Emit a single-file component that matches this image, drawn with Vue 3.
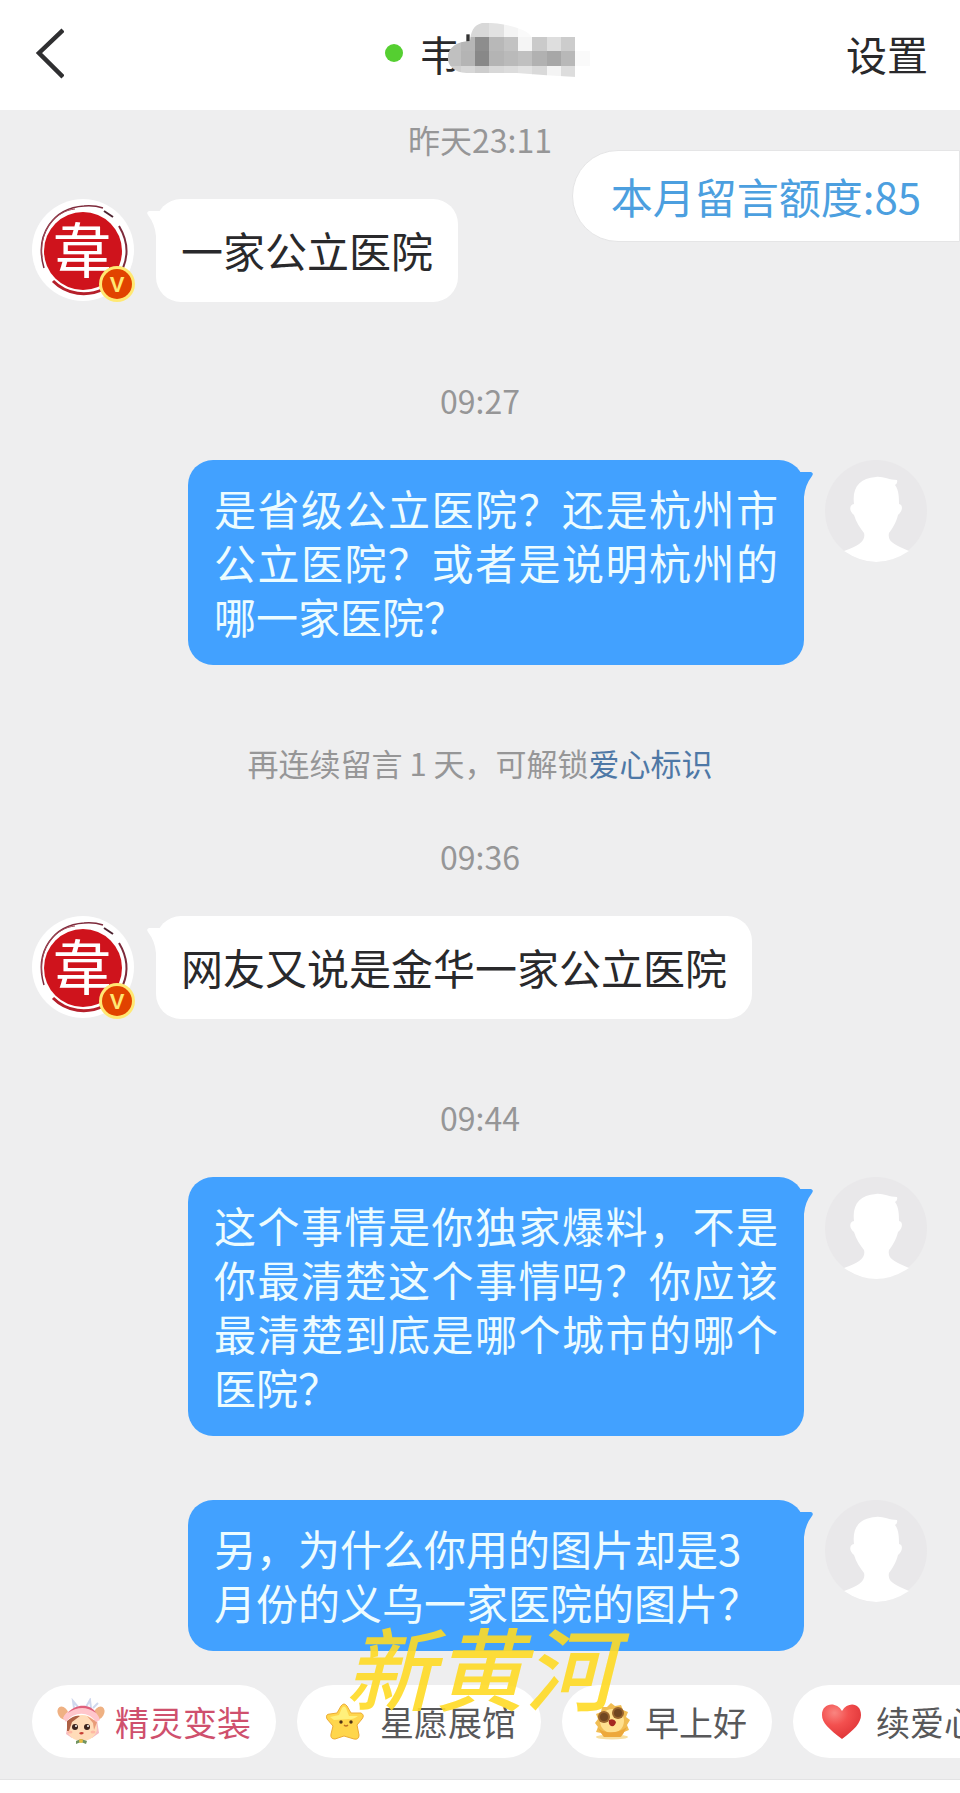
<template>
  <div class="chat" lang="zh-CN">
    <header class="topbar">
      <button class="back" type="button" aria-label="返回">
        <svg width="32" height="52" viewBox="0 0 32 52">
          <path d="M31 3 L7 26 L31 50" fill="none" stroke="#2f2f31" stroke-width="4.5" />
        </svg>
      </button>
      <h1 class="title">
        <span class="online"></span>
        <span class="name">韦
          <svg class="mosaic" width="147" height="57" viewBox="225 35 441 171" aria-hidden="true">
            <defs>
              <clipPath id="smudge">
                <path d="M300 92 C303 52 320 38 345 37 C400 37 480 58 484 80 H660 V167 H618 V200 L530 195 L440 188 H290 C250 186 233 165 233 140 C235 112 260 93 300 92Z" />
              </clipPath>
            </defs>
            <rect x="289" y="72" width="10" height="22" fill="#333" />
            <g clip-path="url(#smudge)" shape-rendering="crispEdges">
              <rect
                v-for="(cell, i) in mosaic"
                :key="i"
                :x="cell.x"
                :y="cell.y"
                width="44"
                height="43"
                :fill="cell.fill"
              />
            </g>
          </svg>
        </span>
      </h1>
      <button class="settings" type="button">设置</button>
    </header>

    <main class="thread">
      <div class="quota">本月留言额度:85</div>

      <template v-for="(item, i) in items" :key="i">
        <p v-if="item.type === 'time'" class="time">{{ item.text }}</p>
        <p v-else-if="item.type === 'notice'" class="notice">
          {{ item.text }}<a href="#">{{ item.link }}</a>
        </p>
        <div v-else class="message" :class="item.type">
          <svg v-if="item.type === 'theirs'" class="avatar" viewBox="0 0 103 103" aria-hidden="true">
            <circle cx="51" cy="51" r="51" fill="#fff" />
            <circle cx="51" cy="52" r="39" fill="#cf131c" />
            <path d="M12 69 C2 35 22 9 52 7 Q62 6 71 9" fill="none" stroke="#7d2a3b" stroke-width="1.5" />
            <path d="M10 58 C7 32 23 12 43 10" fill="none" stroke="#a34a58" stroke-width="1" />
            <path d="M72 12 L81 18" stroke="#4d2430" stroke-width="2" />
            <path d="M87 27 C96 42 96 57 91 69" fill="none" stroke="#7d2a3b" stroke-width="2" />
            <path d="M21 82 C35 96 55 98 72 90" fill="none" stroke="#b5202b" stroke-width="3" />
            <text x="50" y="74" class="seal">韋</text>
            <circle cx="85" cy="85" r="18" fill="#ffe873" />
            <circle cx="85" cy="85" r="15" fill="#e14300" />
            <text x="85" y="93" class="vip">V</text>
          </svg>
          <div class="bubble" :class="{ justified: item.justified }">
            <p>{{ item.text }}</p>
            <svg class="tail" width="26" height="26" viewBox="0 0 26 26" aria-hidden="true">
              <path d="M0 1 H23 Q26 2 24 5 Q17 14 16 26 H0Z" fill="currentColor" />
            </svg>
          </div>
          <svg v-if="item.type === 'mine'" class="avatar" viewBox="0 0 103 103" aria-hidden="true">
            <circle cx="51" cy="51" r="51" fill="#e9e8ea" />
            <path
              d="M51 17 C57 16 64 20 72 20 Q73 23 70 25 C74 30 74 38 74 44 C79 45 77 52 73 55 C71 63 67 69 64 73 C62 82 70 85 84 91 Q51 113 19 91 C34 86 41 81 39 73 C35 68 31 62 29 55 C24 51 24 45 29 44 C27 28 34 18 51 17Z"
              fill="#fff"
            />
          </svg>
        </div>
      </template>
    </main>

    <footer class="bottom">
      <nav class="chips">
        <button v-for="chip in chips" :key="chip.icon" class="chip" :class="chip.icon" type="button">
          <svg v-if="chip.icon === 'deer'" width="48" height="48" viewBox="0 0 48 48" aria-hidden="true">
            <path d="M17 10 L16 3 L21 9 M29 9 L33 2 L34 10 M36 10 L41 5" fill="none" stroke="#cfd8ee" stroke-width="2" />
            <ellipse cx="6" cy="15" rx="5" ry="7" transform="rotate(-30 6 15)" fill="#efb183" />
            <ellipse cx="42" cy="15" rx="5" ry="7" transform="rotate(30 42 15)" fill="#efb183" />
            <path d="M11 24 L9 36 L15 40 L35 40 L42 35 L40 22Z" fill="#f7bcc2" />
            <ellipse cx="25" cy="30" rx="15" ry="13" fill="#ffdcb9" />
            <path d="M10 33 V23 Q17 17 23 18 L15 24 L12 33Z" fill="#ad6044" />
            <path d="M37 32 L40 24 L30 18 L36 25Z" fill="#e99b78" />
            <path d="M6 20 C12 6 38 4 43 22 L39 24 C32 13 17 13 9 24Z" fill="#ffc6cb" />
            <path d="M11 15 C19 5 34 6 39 15 C29 8 20 9 11 15Z" fill="#df607c" />
            <circle cx="18" cy="29" r="3" fill="#3c241e" />
            <circle cx="30" cy="29" r="3" fill="#3c241e" />
            <circle cx="19" cy="28" r="1" fill="#fff" />
            <circle cx="31" cy="28" r="1" fill="#fff" />
            <ellipse cx="13" cy="34" rx="2.5" ry="1.5" fill="#ffb9a4" />
            <ellipse cx="36" cy="34" rx="2.5" ry="1.5" fill="#ffb9a4" />
            <path d="M22 35 Q24 38 27 35 Q25 33 22 35Z" fill="#c63f34" />
            <path d="M19 43 L24 41 L30 43 L29 46 L24 44 L19 46Z" fill="#709361" />
            <circle cx="24" cy="43" r="2" fill="#e9bd42" />
          </svg>
          <svg v-else-if="chip.icon === 'star'" width="48" height="48" viewBox="0 0 48 48" aria-hidden="true">
            <path
              d="M19 8 Q22 4 25 8 L29 15 L39 15 Q43 17 40 21 L35 27 L37 37 Q37 42 32 41 L22 38 L13 41 Q8 41 9 36 L11 28 L5 21 Q3 16 8 16 L15 15Z"
              fill="#ffd64c"
              stroke="#edac35"
              stroke-width="1"
            />
            <path d="M20 10 Q22 7 24 10 L27 18 L36 18 Q30 22 27 21 L12 22 L8 19 L17 17Z" fill="#fff07b" />
            <circle cx="19" cy="24" r="1.7" fill="#513217" />
            <circle cx="29" cy="24" r="1.7" fill="#513217" />
            <path d="M22 27 Q24 29 26 27" fill="none" stroke="#bd7526" stroke-width="1.4" />
          </svg>
          <svg v-else-if="chip.icon === 'sun'" width="48" height="48" viewBox="0 0 48 48" aria-hidden="true">
            <ellipse cx="25" cy="39" rx="16" ry="2.5" fill="#f8dfa0" />
            <path
              d="M15 9 L20 9 L24 5 L28 8 L34 7 L36 12 L41 14 L39 19 L43 22 L40 27 L42 32 L37 34 L34 39 L17 39 L14 35 L9 34 L11 29 L8 25 L11 21 L9 16 L14 14Z"
              fill="#f1bd53"
            />
            <circle cx="25" cy="23" r="12" fill="#ffe08f" />
            <path d="M10 29 C16 36 31 36 40 29 L36 36 L33 39 H17Z" fill="#eda83b" />
            <circle cx="17" cy="19" r="6" fill="#99642d" />
            <circle cx="31" cy="15" r="6" fill="#99642d" />
            <circle cx="17" cy="19" r="4" fill="#704621" />
            <circle cx="31" cy="15" r="4" fill="#704621" />
            <path d="M22 22 Q27 20 29 24 Q28 29 24 28 Q21 26 22 22Z" fill="#a52820" />
          </svg>
          <svg v-else width="48" height="48" viewBox="0 0 48 48" aria-hidden="true">
            <defs>
              <radialGradient id="heart" cx="32%" cy="24%" r="80%">
                <stop offset="0" stop-color="#f98580" />
                <stop offset="0.45" stop-color="#f3504f" />
                <stop offset="1" stop-color="#df3437" />
              </radialGradient>
            </defs>
            <path d="M24 41 C11 31 4 25 4 17 C4 5 18 3 24 13 C30 3 43 5 43 17 C43 25 36 32 24 41Z" fill="url(#heart)" />
          </svg>
          {{ chip.label }}
        </button>
      </nav>
      <div class="watermark">新黄河</div>
    </footer>
  </div>
</template>

<script setup>
const items = [
  { type: 'time', text: '昨天23:11' },
  { type: 'theirs', text: '一家公立医院' },
  { type: 'time', text: '09:27' },
  { type: 'mine', text: '是省级公立医院？还是杭州市公立医院？或者是说明杭州的哪一家医院？', justified: true },
  { type: 'notice', text: '再连续留言 1 天，可解锁', link: '爱心标识' },
  { type: 'time', text: '09:36' },
  { type: 'theirs', text: '网友又说是金华一家公立医院' },
  { type: 'time', text: '09:44' },
  { type: 'mine', text: '这个事情是你独家爆料，不是你最清楚这个事情吗？你应该最清楚到底是哪个城市的哪个医院？', justified: true },
  { type: 'mine', text: '另，为什么你用的图片却是3月份的义乌一家医院的图片？' }
];

const chips = [
  { icon: 'deer', label: '精灵变装' },
  { icon: 'star', label: '星愿展馆' },
  { icon: 'sun', label: '早上好' },
  { icon: 'heart', label: '续爱心' }
];

// grey levels of the blocks that hide the rest of the name
const shades = [
  ['ff', 'd8', 'd8', 'e2', 'f4', 'fa', 'ff', 'ff', 'ff', 'ff'],
  ['c0', 'b6', '8d', 'b8', 'c2', 'f5', 'ca', 'de', 'cc', 'ff'],
  ['c0', 'b4', '88', 'b4', 'ba', 'c0', 'b1', 'a7', 'b8', 'fa'],
  ['d0', 'd7', 'cd', 'd8', 'dc', 'e2', 'd9', 'f4', 'dd', 'ff']
];
const mosaic = shades.flatMap((row, r) =>
  row.map((shade, c) => ({ x: 229 + c * 43, y: 37 + r * 43, fill: `#${shade}${shade}${shade}` }))
);
</script>

<style>
body {
  background: #fff;
}
</style>

<style scoped>
.chat {
  font-family: 'Noto Sans CJK SC', sans-serif;
  color: #29292b;
  background: #eeeeef;
  overflow: hidden;
}

button {
  padding: 0;
  border: 0;
  background: none;
  font: inherit;
  color: inherit;
}

p {
  margin: 0;
}

.topbar {
  display: grid;
  grid-template-columns: 1fr auto 1fr;
  align-items: center;
  box-sizing: border-box;
  height: 110px;
  padding: 0 32px 5px;
  background: #fff;
  font-size: 41px;
  line-height: 56px;
}

.back {
  justify-self: start;
  display: flex;
}

.settings {
  justify-self: end;
}

.title {
  display: flex;
  align-items: center;
  gap: 16px;
  margin: 0;
  font-size: 41px;
  font-weight: 400;
}

.online {
  width: 18px;
  height: 18px;
  border-radius: 50%;
  background: #55cf31;
}

.name {
  position: relative;
  width: 156px;
}

.mosaic {
  position: absolute;
  left: 26px;
  top: -3px;
}

.thread {
  position: relative;
  padding: 8px 32px 34px;
}

.quota {
  position: absolute;
  top: 40px;
  right: 0;
  padding: 0 38px;
  border: 1px solid #e5e5e6;
  border-radius: 46px 0 0 46px;
  background: #fff;
  color: #4c9fdf;
  font-size: 42px;
  line-height: 90px;
}

.time,
.notice {
  margin-top: 77px;
  text-align: center;
  color: #969697;
  font-size: 32px;
  line-height: 42px;
}

.time:nth-child(2) {
  margin-top: 0;
}

.notice {
  font-size: 31px;
}

.notice a {
  color: #4e78a6;
  text-decoration: none;
}

.notice + .time {
  margin-top: 51px;
}

.message {
  display: flex;
  align-items: flex-start;
  gap: 21px;
  margin-top: 39px;
}

.message + .message {
  margin-top: 64px;
}

.mine {
  justify-content: flex-end;
}

.avatar {
  flex: none;
  width: 103px;
  height: 103px;
}

.seal {
  fill: #fff;
  font-size: 60px;
  font-weight: 400;
  text-anchor: middle;
}

.vip {
  fill: #ffe873;
  font-family: 'Liberation Sans', sans-serif;
  font-size: 22px;
  font-weight: 700;
  text-anchor: middle;
}

.bubble {
  position: relative;
  display: flex;
  align-items: center;
  box-sizing: border-box;
  min-height: 103px;
  max-width: 616px;
  padding: 22px 25px;
  border-radius: 25px;
  background: #fff;
  color: #fff;
  font-size: 42px;
  line-height: 54px;
}

.theirs .bubble {
  padding: 22px 25px 24px;
}

.bubble p {
  color: #29292b;
}

.mine .bubble {
  padding: 21px 26px 22px;
  background: #42a1ff;
  color: #42a1ff;
}

.mine .bubble p {
  color: #edfcff;
}

.justified {
  text-align: justify;
}

.tail {
  position: absolute;
  top: 11px;
  right: -10px;
}

.theirs .tail {
  right: auto;
  left: -10px;
  transform: scaleX(-1);
}

.bottom {
  position: relative;
  padding-bottom: 13px;
  background: #fff;
}

.chips {
  display: flex;
  gap: 21px;
  padding: 0 0 21px 32px;
  border-bottom: 1px solid #e3e3e4;
  background: #eeeeef;
  overflow: hidden;
}

.chip {
  flex: none;
  display: flex;
  align-items: center;
  gap: 10px;
  height: 73px;
  padding: 0 25px;
  border-radius: 37px;
  background: #fff;
  color: #58585a;
  font-size: 34px;
  white-space: nowrap;
}

.deer {
  color: #cf506d;
}

.watermark {
  position: absolute;
  left: 0;
  right: 0;
  bottom: 58px;
  text-align: center;
  color: #ffdb25;
  font-size: 90px;
  font-style: italic;
  font-weight: 500;
  line-height: 140px;
  opacity: 0.9;
  pointer-events: none;
}
</style>
